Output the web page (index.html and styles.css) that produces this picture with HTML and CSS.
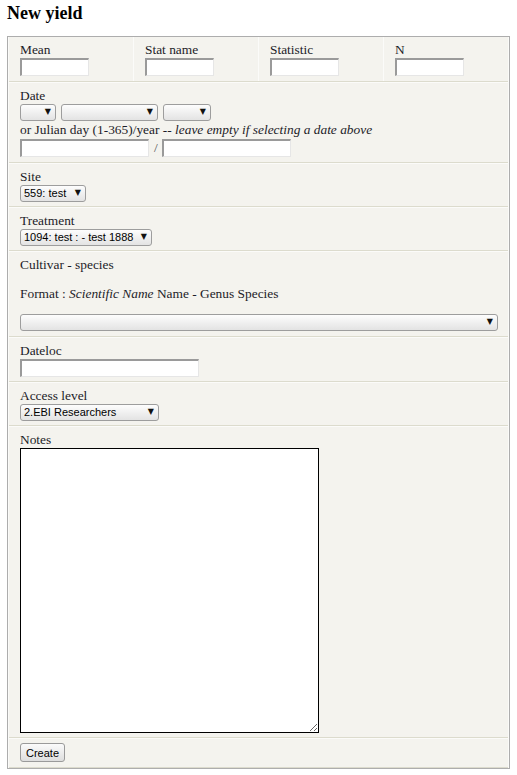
FILE: index.html
```html
<!DOCTYPE html>
<html>
<head>
<meta charset="utf-8">
<link rel="stylesheet" href="styles.css">
</head>
<body>
<h2 class="title">New yield</h2>
<form class="form">
  <div class="row cols">
    <div class="cell"><label class="lbl">Mean</label><input class="txt small" type="text"></div>
    <div class="cell"><label class="lbl">Stat name</label><input class="txt small" type="text"></div>
    <div class="cell"><label class="lbl">Statistic</label><input class="txt small" type="text"></div>
    <div class="cell"><label class="lbl">N</label><input class="txt small" type="text"></div>
  </div>
  <div class="row date">
    <label class="lbl">Date</label>
    <div class="line">
      <span class="sel w-day"><select></select></span>
      <span class="sel w-month"><select></select></span>
      <span class="sel w-year"><select></select></span>
    </div>
    <div class="note">or Julian day (1-365)/year -- <em>leave empty if selecting a date above</em></div>
    <div class="line">
      <input class="txt julian" type="text"><span class="slash">/</span><input class="txt julian" type="text">
    </div>
  </div>
  <div class="row">
    <label class="lbl">Site</label>
    <span class="sel w-site"><select><option>559: test</option></select></span>
  </div>
  <div class="row">
    <label class="lbl">Treatment</label>
    <span class="sel w-treat"><select><option>1094: test : - test 1888</option></select></span>
  </div>
  <div class="row">
    <label class="lbl">Cultivar - species</label>
    <p class="fmt">Format : <em>Scientific Name</em> Name - Genus Species</p>
    <span class="sel w-full"><select></select></span>
  </div>
  <div class="row">
    <label class="lbl">Dateloc</label>
    <input class="txt dateloc" type="text">
  </div>
  <div class="row">
    <label class="lbl">Access level</label>
    <span class="sel w-access"><select><option>2.EBI Researchers</option></select></span>
  </div>
  <div class="row">
    <label class="lbl">Notes</label>
    <textarea class="notes"></textarea>
  </div>
  <div class="row last">
    <button type="button" class="btn">Create</button>
  </div>
</form>
</body>
</html>
```
FILE: styles.css
```css
html, body {
  margin: 0;
  background: #fff;
}
body {
  padding: 3px 7px 0;
  font-family: "Liberation Serif", "Times New Roman", serif;
  font-size: 13.4px;
  color: #1c1c28;
}
.title {
  margin: 0 0 12px;
  font-size: 18px;
  line-height: 21px;
  font-weight: bold;
  color: #000;
}
.form {
  box-sizing: border-box;
  width: 503px;
  border: 1px solid #adadad;
  padding: 0 1px;
  background: #fbfbf9;
  display: flex;
  flex-direction: column;
  gap: 1px;
}
.row {
  background: #f4f3ee;
  padding: 5px 11px 4px;
  border-bottom: 1px solid #dcdbcd;
  display: flex;
  flex-direction: column;
  align-items: flex-start;
}
.row.date {
  padding: 5px 11px 5px;
}
.row.last {
  padding: 4px 11px 5px;
}
.row.cols {
  flex-direction: row;
  padding: 0;
  gap: 1px;
  background: #fbfbf9;
}
.cell {
  flex: 1;
  background: #f4f3ee;
  padding: 5px 11px 5px;
  display: flex;
  flex-direction: column;
  align-items: flex-start;
}
.lbl {
  display: block;
  line-height: 16px;
  height: 16px;
}
.txt {
  box-sizing: border-box;
  height: 18px;
  margin: 0;
  padding: 1px 2px;
  background: #fff;
  border-style: solid;
  border-width: 2px 1px 1px 2px;
  border-color: #9a9a9a #e6e6e6 #e6e6e6 #9a9a9a;
  font-size: 12px;
}
.small { width: 69px; }
.julian { width: 129px; }
.dateloc { width: 179px; }
.line {
  display: flex;
  align-items: center;
  gap: 5px;
}
.note {
  line-height: 16px;
  margin: 1px 0 1px;
}
.slash {
  width: 3px;
  color: #555;
  text-align: center;
}
.sel {
  position: relative;
  display: inline-block;
  height: 17px;
}
.sel select {
  appearance: none;
  -webkit-appearance: none;
  box-sizing: border-box;
  width: 100%;
  height: 17px;
  margin: 0;
  padding: 0 14px 0 3px;
  border: 1px solid #9d9d9d;
  border-radius: 3px;
  background: linear-gradient(#fdfdfd, #e3e3e3);
  font-family: "Liberation Sans", Arial, sans-serif;
  font-size: 11px;
  line-height: 15px;
  color: #000;
}
.sel::after {
  content: "▼";
  position: absolute;
  right: 5px;
  top: 3px;
  font-family: "DejaVu Sans", sans-serif;
  font-size: 8px;
  line-height: 10px;
  color: #111;
  pointer-events: none;
}
.w-day { width: 36px; }
.w-month { width: 97px; }
.w-year { width: 48px; }
.w-site { width: 66px; }
.w-treat { width: 132px; }
.w-access { width: 139px; }
.w-full { width: 478px; margin-bottom: 1px; }
.fmt {
  margin: 13px 0 12px;
  line-height: 16px;
}
.notes {
  box-sizing: border-box;
  width: 299px;
  height: 285px;
  border: 1px solid #000;
  margin: 0;
  padding: 2px;
  background: #fff;
  resize: both;
}
.btn {
  box-sizing: border-box;
  height: 19px;
  width: 45px;
  padding: 0;
  border: 1px solid #9a9a9a;
  border-radius: 3px;
  background: linear-gradient(#fbfbfb, #dedede);
  font-family: "Liberation Sans", Arial, sans-serif;
  font-size: 11px;
  color: #000;
}
```
